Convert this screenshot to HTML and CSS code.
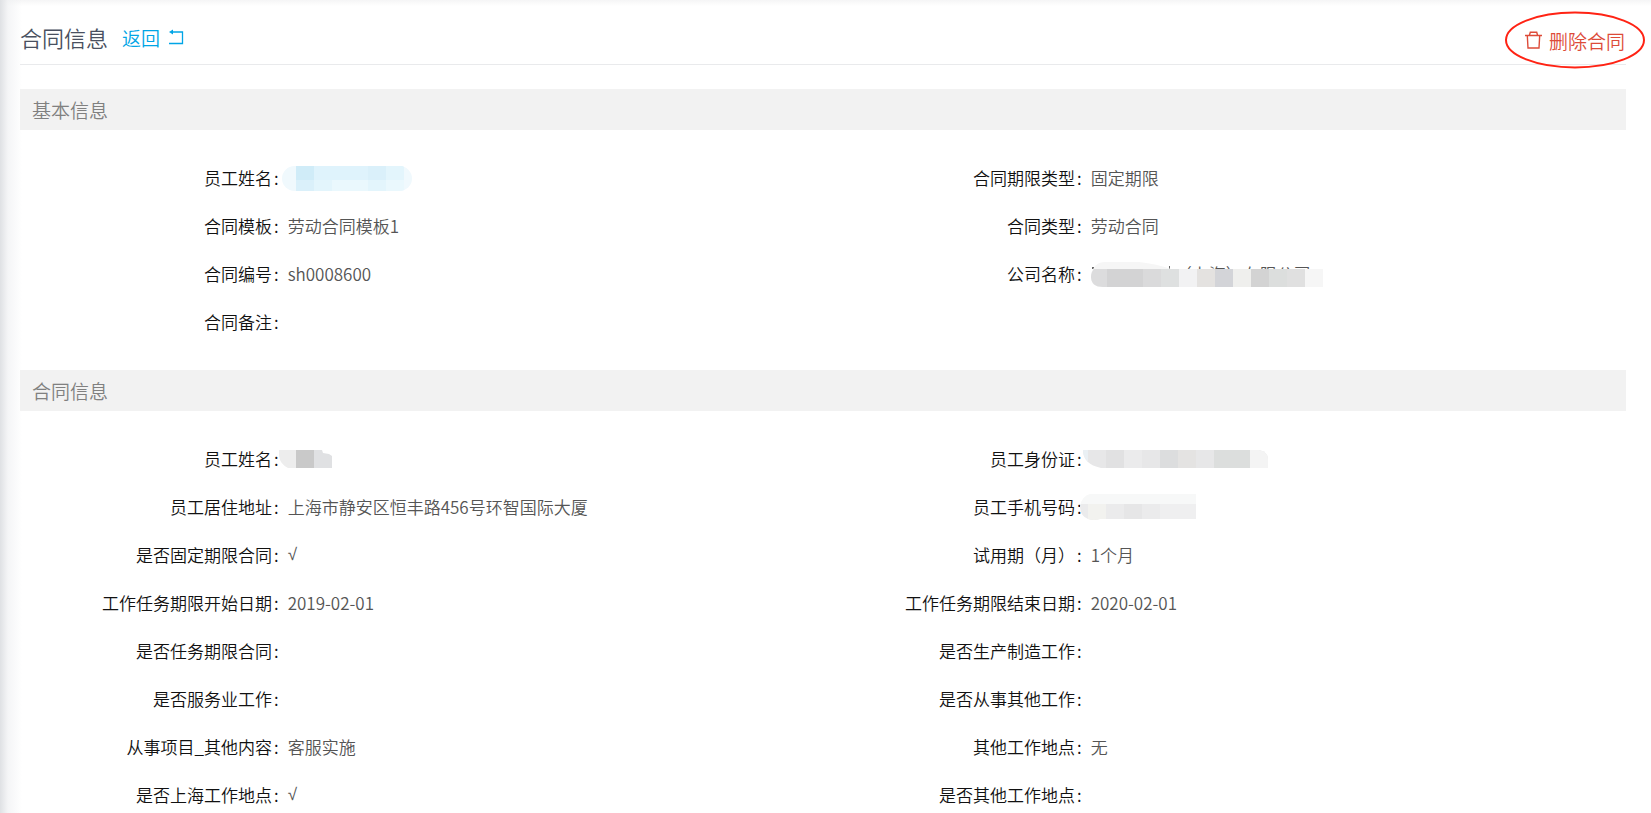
FILE: index.html
```html
<!DOCTYPE html>
<html lang="zh-CN">
<head>
<meta charset="utf-8">
<title>合同信息</title>
<link rel="stylesheet" href="styles.css">
</head>
<body>
<main class="page">
  <header class="page-header">
    <h1 class="page-title">合同信息</h1>
    <a class="back-link" href="#">返回
      <svg class="back-icon" viewBox="0 0 16 16" aria-hidden="true"><path d="M1 14.5H14.5V3H3" fill="none" stroke="currentColor" stroke-width="1.3"/><path d="M1 3L5 .5V5.5Z" fill="currentColor"/></svg>
    </a>
    <button class="delete-button" type="button">
      <svg class="delete-icon" viewBox="0 0 17 18" aria-hidden="true"><g fill="none" stroke="currentColor" stroke-width="1.4"><path d="M0 4.5H17M4.5 4L5.3 1.2H11.7L12.5 4M2.3 4.5L3 17H14L14.7 4.5"/></g></svg>
      删除合同
      <svg class="callout" viewBox="0 0 141 58" aria-hidden="true"><ellipse cx="70.5" cy="29" rx="69" ry="27.5" fill="none" stroke="#ff2314" stroke-width="2"/></svg>
    </button>
  </header>

  <section>
    <h2 class="section-title">基本信息</h2>
    <dl class="fields">
      <div class="field"><dt>员工姓名</dt><dd>
        <svg class="mask mask-name" width="130" height="25" viewBox="0 0 130 25" aria-hidden="true"><clipPath id="m1"><rect width="130" height="25" rx="12.5"/></clipPath><g clip-path="url(#m1)"><path fill="#f0f9fd" d="M0 0H130V25H0z"/><path fill="#d0ecf8" d="M14 0H32V14H14z"/><path fill="#dff3fc" d="M32 0H122V14H32z"/><path fill="#daf0fa" d="M14 14H32V25H14zM86 0H104V14H86z"/><path fill="#e3f5fc" d="M32 14H50V25H32zM86 14H104V25H86zM104 0H122V14H104z"/><path fill="#eaf8fd" d="M50 14H86V25H50zM104 14H122V25H104z"/></g></svg>
      </dd></div>
      <div class="field"><dt>合同期限类型</dt><dd>固定期限</dd></div>
      <div class="field"><dt>合同模板</dt><dd>劳动合同模板1</dd></div>
      <div class="field"><dt>合同类型</dt><dd>劳动合同</dd></div>
      <div class="field"><dt>合同编号</dt><dd>sh0008600</dd></div>
      <div class="field"><dt>公司名称</dt><dd class="company">（上海）有限公司
        <svg class="mask mask-company" width="232" height="25" viewBox="0 0 232 25" aria-hidden="true"><path fill="#666" d="M1 5H3V7H1zM78 4H79V7H78z"/><path fill="#f6f6f6" d="M0 13Q3 0 14 0H48Q66 2 80 7V13z"/><clipPath id="m2"><path d="M3 7H232V25H12Q0 25 0 15Q0 10 3 7z"/></clipPath><g clip-path="url(#m2)"><path fill="#dcdcdd" d="M0 7H16V25H0z"/><path fill="#d3d3d4" d="M16 7H52V25H16z"/><path fill="#dadadb" d="M52 7H70V25H52z"/><path fill="#dee0e0" d="M70 7H88V25H70z"/><path fill="#f2f2f3" d="M88 7H106V25H88z"/><path fill="#e4e2e0" d="M106 7H124V25H106z"/><path fill="#d3d4d8" d="M124 7H142V25H124z"/><path fill="#efefed" d="M142 7H160V25H142z"/><path fill="#d3d3d3" d="M160 7H178V25H160z"/><path fill="#dcdedd" d="M178 7H196V25H178z"/><path fill="#e0e0e0" d="M196 7H214V25H196z"/><path fill="#f6f6f6" d="M214 7H232V25H214z"/></g></svg>
      </dd></div>
      <div class="field"><dt>合同备注</dt><dd></dd></div>
    </dl>
  </section>

  <section>
    <h2 class="section-title">合同信息</h2>
    <dl class="fields">
      <div class="field"><dt>员工姓名</dt><dd>
        <svg class="mask mask-short" width="53" height="18" viewBox="0 0 53 18" aria-hidden="true"><path fill="#ededed" d="M0 0H17V18H9Q1 14 0 6z"/><path fill="#c9c9c9" d="M17 0H35V18H17z"/><path fill="#e0e1e3" d="M35 0H43L44 3L50 4L53 6V18H35z"/></svg>
      </dd></div>
      <div class="field"><dt>员工身份证</dt><dd>
        <svg class="mask mask-id" width="185" height="18" viewBox="0 0 185 18" aria-hidden="true"><clipPath id="m3"><path d="M0 0H176Q185 2 185 9V18H18Q0 14 0 0z"/></clipPath><g clip-path="url(#m3)"><path fill="#e7e7e8" d="M0 0H185V18H0z"/><path fill="#eaf0f4" d="M0 0H5V18H0z"/><path fill="#e1e1e2" d="M23 0H41V18H23z"/><path fill="#ebebec" d="M41 0H59V18H41z"/><path fill="#dcddde" d="M77 0H95V18H77z"/><path fill="#e4e3e2" d="M95 0H113V18H95z"/><path fill="#dcdedd" d="M131 0H167V18H131z"/><path fill="#f4f4f4" d="M167 0H185V18H167z"/></g></svg>
      </dd></div>
      <div class="field"><dt>员工居住地址</dt><dd>上海市静安区恒丰路456号环智国际大厦</dd></div>
      <div class="field"><dt>员工手机号码</dt><dd>
        <svg class="mask mask-phone" width="116" height="26" viewBox="0 0 116 26" aria-hidden="true"><clipPath id="m4"><path d="M10 0H116V25H20Q14 27 8 25Q0 22 0 12Q2 2 10 0z"/></clipPath><g clip-path="url(#m4)"><path fill="#f7f8f8" d="M0 0H116V10H0z"/><path fill="#ebebec" d="M0 10H116V26H0z"/><path fill="#f2f2ef" d="M8 10H26V26H8z"/><path fill="#e6e6e7" d="M44 10H62V26H44z"/><path fill="#efeff0" d="M80 10H116V26H80z"/></g></svg>
      </dd></div>
      <div class="field"><dt>是否固定期限合同</dt><dd class="tick">√</dd></div>
      <div class="field"><dt>试用期（月）</dt><dd>1个月</dd></div>
      <div class="field"><dt>工作任务期限开始日期</dt><dd>2019-02-01</dd></div>
      <div class="field"><dt>工作任务期限结束日期</dt><dd>2020-02-01</dd></div>
      <div class="field"><dt>是否任务期限合同</dt><dd></dd></div>
      <div class="field"><dt>是否生产制造工作</dt><dd></dd></div>
      <div class="field"><dt>是否服务业工作</dt><dd></dd></div>
      <div class="field"><dt>是否从事其他工作</dt><dd></dd></div>
      <div class="field"><dt>从事项目_其他内容</dt><dd>客服实施</dd></div>
      <div class="field"><dt>其他工作地点</dt><dd>无</dd></div>
      <div class="field"><dt>是否上海工作地点</dt><dd class="tick">√</dd></div>
      <div class="field"><dt>是否其他工作地点</dt><dd></dd></div>
    </dl>
  </section>
</main>
</body>
</html>
```

FILE: styles.css
```css
* {
  box-sizing: border-box;
}

body {
  margin: 0;
  background: #fff;
  color: #111;
  font-family: "Noto Sans CJK SC", sans-serif;
  font-size: 17px;
  font-weight: 350;
}

.page {
  min-height: 100vh;
  padding: 12px 25px 0 20px;
  background:
    linear-gradient(to right, #dfe1e4, rgba(240, 241, 243, 0.7) 8px, rgba(255, 255, 255, 0) 22px),
    linear-gradient(to bottom, #f5f5f6, #fff 6px);
}

.page-header {
  display: flex;
  align-items: center;
  height: 53px;
  margin-bottom: 24px;
  padding-bottom: 2px;
  border-bottom: 1px solid #e9eaec;
}

.page-title {
  margin: 0;
  color: #495060;
  font-size: 22px;
  font-weight: 350;
}

.back-link {
  display: flex;
  align-items: center;
  gap: 8px;
  margin-left: 14px;
  color: #00a5e6;
  font-size: 19px;
  text-decoration: none;
}

.back-icon {
  width: 16px;
  height: 16px;
}

.delete-button {
  position: relative;
  display: flex;
  align-items: center;
  gap: 7px;
  margin-left: auto;
  padding: 6px 1px 0 0;
  border: 0;
  background: none;
  color: #dd4b39;
  font: inherit;
  font-size: 19px;
}

.delete-icon {
  width: 17px;
  height: 18px;
}

.callout {
  position: absolute;
  top: 60%;
  left: 50%;
  width: 141px;
  height: 58px;
  transform: translate(-50%, -50%);
  pointer-events: none;
}

.section-title {
  margin: 0;
  padding: 0 12px;
  background: #f2f2f2;
  color: #808080;
  font-size: 19px;
  font-weight: 350;
  line-height: 41px;
}

.fields {
  display: grid;
  grid-template-columns: 1fr 1fr;
  margin: 0;
  padding: 24px 0;
}

.field {
  display: grid;
  grid-template-columns: 1fr 2fr;
  height: 48px;
  line-height: 48px;
}

.field dt {
  text-align: right;
}

.field dt::after {
  content: ":";
  margin: 0 9px 0 2px;
}

.field dd {
  display: flex;
  align-items: center;
  margin: 0;
  color: #555;
}

.field .tick {
  font-family: "Liberation Sans", sans-serif;
}

.company {
  position: relative;
}

.field .company {
  padding-left: 84px;
}

.mask-name {
  margin-left: -6px;
}

.mask-company {
  position: absolute;
  left: 0;
}

.mask-short {
  margin-left: -9px;
}

.mask-id {
  margin-left: -8px;
}

.mask-phone {
  margin-left: -11px;
}
```
